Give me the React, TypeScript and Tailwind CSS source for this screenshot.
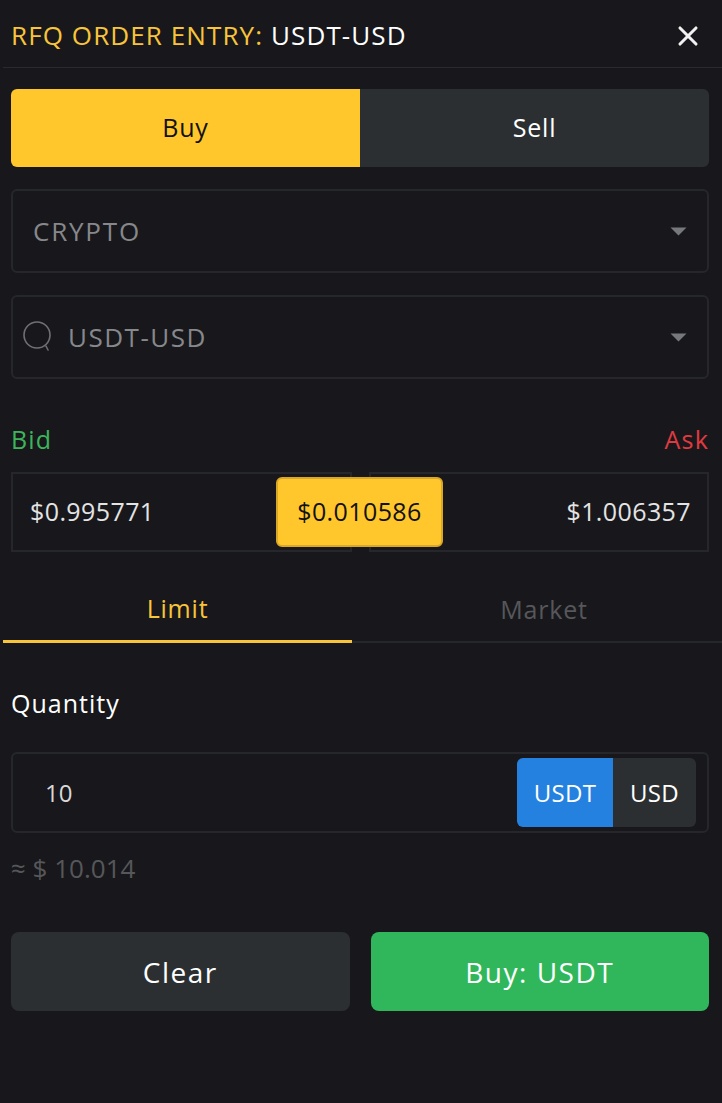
import { X } from 'lucide-react';

const font = { fontFamily: '"Open Sans", "Liberation Sans", sans-serif' };

const Caret = () => (
  <svg width="17" height="9" viewBox="0 0 17 9" className="shrink-0">
    <path d="M0.5 0.5h16L8.5 8.5z" fill="#77787b" />
  </svg>
);

const SearchIcon = () => (
  <svg width="32" height="34" viewBox="0 0 32 34" fill="none" className="shrink-0">
    <circle cx="15" cy="15" r="13" stroke="#6f7073" strokeWidth="1.6" />
    <path d="M24 26l2 4" stroke="#6f7073" strokeWidth="1.6" strokeLinecap="round" />
  </svg>
);

export default function App() {
  return (
    <div className="min-h-[1103px] w-[722px] bg-[#18181c] text-white pt-1 pl-[3px]" style={font}>
      {/* Header */}
      <div className="flex items-center justify-between h-[64px] border-b border-[#2a2a2e] pl-2 pr-[18px]">
        <h1 className="text-[26px] tracking-[1.1px]">
          <span className="text-[#f8c53a]">RFQ ORDER ENTRY: </span>
          <span className="text-white">USDT-USD</span>
        </h1>
        <X className="w-8 h-8 text-[#f1f1f1]" strokeWidth={2.3} />
      </div>

      <div className="px-2 pr-[13px]">
        {/* Buy / Sell */}
        <div className="mt-[21px] grid grid-cols-2 h-[78px] rounded-md overflow-hidden text-[25px] tracking-[0.8px]">
          <button className="bg-[#ffc72c] text-[#111]">Buy</button>
          <button className="bg-[#2c2f31] text-white">Sell</button>
        </div>

        {/* Category select */}
        <div className="mt-[22px] h-[84px] flex items-center justify-between border-2 border-[#26272b] rounded-md pl-[20px] pr-[20px]">
          <span className="text-[26px] tracking-[1.8px] text-[#87888b]">CRYPTO</span>
          <Caret />
        </div>

        {/* Symbol select */}
        <div className="mt-[22px] h-[84px] flex items-center justify-between border-2 border-[#26272b] rounded-md pl-[9px] pr-[20px]">
          <div className="flex items-center gap-[14px]">
            <SearchIcon />
            <span className="text-[26px] tracking-[1.5px] text-[#87888b]">USDT-USD</span>
          </div>
          <Caret />
        </div>

        {/* Bid / Ask */}
        <div className="mt-[48px] flex justify-between text-[25px] tracking-[1.2px] leading-none">
          <span className="text-[#3cb55a]">Bid</span>
          <span className="text-[#e03a40]">Ask</span>
        </div>

        <div className="relative mt-[20px] grid grid-cols-2 gap-[17px] h-[80px] text-[25px] tracking-[0.4px]">
          <div className="border-2 border-[#26272b] flex items-center pl-[17px] text-[#e4e4e4]">$0.995771</div>
          <div className="border-2 border-[#26272b] flex items-center justify-end pr-[16px] text-[#e4e4e4]">$1.006357</div>
          <div className="absolute left-[265px] top-[5px] w-[167px] h-[70px] rounded-md bg-[#ffc72c] border-2 border-[#d9a826] flex items-center justify-center text-[#111]">
            $0.010586
          </div>
        </div>
      </div>

      {/* Limit / Market tabs */}
      <div className="mt-[26px] grid grid-cols-[349px_1fr] text-[25px] tracking-[0.8px]">
        <div className="h-[65px] flex items-center justify-center text-[#f8c53a] border-b-[3px] border-[#f8c53a]">Limit</div>
        <div className="h-[65px] flex items-center justify-center pl-[14px] text-[#56575a] border-b-[2px] border-[#26272b]">Market</div>
      </div>

      <div className="px-2 pr-[13px]">
        <div className="mt-[48px] text-[25px] tracking-[1px] leading-none">Quantity</div>

        <div className="mt-[36px] h-[81px] flex items-center justify-between border-2 border-[#26272b] rounded-md pl-[32px] pr-[11px]">
          <span className="text-[24px] text-[#d8d8d8]">10</span>
          <div className="flex h-[69px] rounded-md overflow-hidden text-[24px] tracking-[0.3px]">
            <div className="w-[96px] bg-[#2581e0] flex items-center justify-center">USDT</div>
            <div className="w-[83px] bg-[#2c2f31] flex items-center justify-center">USD</div>
          </div>
        </div>

        <div className="mt-[22px] text-[26px] text-[#56575a] leading-none">≈ $ 10.014</div>

        {/* Actions */}
        <div className="mt-[51px] grid grid-cols-2 gap-[21px] h-[79px] text-[28px] tracking-[1.5px]">
          <button className="bg-[#2c2f31] rounded-lg text-white">Clear</button>
          <button className="bg-[#31b75b] rounded-lg text-white">Buy: USDT</button>
        </div>
      </div>
    </div>
  );
}
